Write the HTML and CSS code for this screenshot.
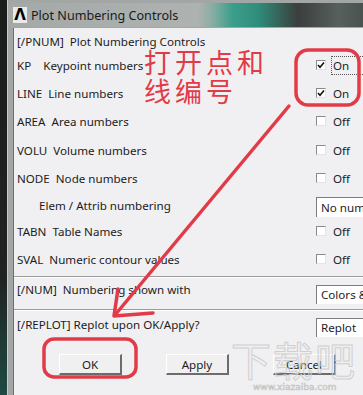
FILE: index.html
```html
<!DOCTYPE html>
<html lang="en">

<head>
    <meta charset="UTF-8" />
    <title>Plot Numbering Controls</title>
    <link rel="stylesheet" href="styles.css">
</head>

<body>
    <div class="screen">
        <div class="edge"></div>
        <div class="window">
            <!-- 标题栏 -->
            <div class="titlebar">
                <span class="logo">&Lambda;</span>
                <span class="title">Plot Numbering Controls</span>
            </div>
            <div class="dialog">
                <div class="heading">[/PNUM]  Plot Numbering Controls</div>
                <div class="row">
                    <span class="label">KP    Keypoint numbers</span>
                    <span class="check"><span class="box"><svg viewBox="0 0 8 8"><polyline points="1,4 3,6.3 7,1.5" /></svg></span><span class="focus">On</span></span>
                </div>
                <div class="row">
                    <span class="label">LINE  Line numbers</span>
                    <span class="check"><span class="box"><svg viewBox="0 0 8 8"><polyline points="1,4 3,6.3 7,1.5" /></svg></span><span>On</span></span>
                </div>
                <div class="row tall">
                    <span class="label">AREA  Area numbers</span>
                    <span class="check"><span class="box"></span><span>Off</span></span>
                </div>
                <div class="row">
                    <span class="label">VOLU  Volume numbers</span>
                    <span class="check"><span class="box"></span><span>Off</span></span>
                </div>
                <div class="row tall">
                    <span class="label">NODE  Node numbers</span>
                    <span class="check"><span class="box"></span><span>Off</span></span>
                </div>
                <div class="row short">
                    <span class="label indent">Elem / Attrib numbering</span>
                    <span class="select">No numbering</span>
                </div>
                <div class="row">
                    <span class="label">TABN  Table Names</span>
                    <span class="check"><span class="box"></span><span>Off</span></span>
                </div>
                <div class="row">
                    <span class="label">SVAL  Numeric contour values</span>
                    <span class="check"><span class="box"></span><span>Off</span></span>
                </div>
                <div class="sep"></div>
                <div class="row opt">
                    <span class="label">[/NUM]  Numbering shown with</span>
                    <span class="select">Colors &amp; numbers</span>
                </div>
                <div class="sep"></div>
                <div class="row opt last">
                    <span class="label">[/REPLOT] Replot upon OK/Apply?</span>
                    <span class="select">Replot</span>
                </div>
                <div class="buttons">
                    <span class="btn">OK</span>
                    <span class="btn">Apply</span>
                    <span class="btn">Cancel</span>
                </div>
            </div>
        </div>

        <!-- 标注 -->
        <svg class="marks" viewBox="0 0 363 395">
            <rect x="296" y="50" width="63" height="55" rx="12" />
            <line x1="289" y1="106" x2="115" y2="315" />
            <polyline points="118,289 114,316 153,313" />
            <rect x="44" y="339" width="92" height="38" rx="10" />
        </svg>
        <div class="note">打开点和<br>线编号</div>
        <div class="watermark">
            <div class="big">下载吧</div>
            <div class="url">www.xiazaiba.com</div>
        </div>
    </div>
</body>

</html>
```

FILE: styles.css
```css
body {
    margin: 0;
    padding: 0;
    background-color: #1e2120;
    overflow: hidden;
}

.screen {
    position: relative;
    display: flex;
    width: 363px;
    height: 395px;
    overflow: hidden;
    font-family: "Noto Sans", "Open Sans", sans-serif;
    font-size: 11.6px;
    color: #1c1c1c;
}

.edge {
    flex: none;
    width: 7px;
    background: linear-gradient(#1b1d1c 0, #202322 70%, #1f4a44 100%);
}

.window {
    display: flex;
    flex-direction: column;
    flex: none;
    width: 420px;
    padding-top: 3px;
    padding-left: 5px;
    background-color: #a2a7a5;
    border-left: 1px solid #c8cccb;
    box-sizing: border-box;
}

.titlebar {
    display: flex;
    flex: none;
    align-items: center;
    height: 24px;
    margin-left: -5px;
    padding-left: 5px;
    background: linear-gradient(to right, #a4a9a7 0, #aeb2b0 190px, #86ada3 205px, #3a9e8a 225px, #2f8d7b 250px, #3b3e3c 290px, #56605c 330px, #2c2e2d 420px);
}

.logo {
    display: flex;
    align-items: center;
    justify-content: center;
    width: 14px;
    height: 16px;
    background-color: #e8eae9;
    font-family: "DejaVu Sans", sans-serif;
    font-weight: bold;
    font-size: 15px;
    color: #000;
}

.title {
    margin-left: 4px;
    font-size: 12.6px;
    color: #1a1a1a;
}

.dialog {
    flex: 1;
    margin-top: 1px;
    padding-top: 4px;
    background-color: #f0f0f2;
    border-left: 1px solid #6b6f6e;
    box-sizing: border-box;
}

.heading {
    height: 19px;
    line-height: 19px;
    padding-left: 3px;
    white-space: pre;
}

.row {
    display: grid;
    grid-template-columns: 302px 1fr;
    align-items: center;
    height: 28px;
}

.row.tall {
    height: 29px;
}

.row.short {
    height: 24px;
}

.row.opt {
    align-items: start;
}

.label {
    padding-left: 3px;
    white-space: pre;
}

.label.indent {
    padding-left: 25px;
}

.row.opt .label {
    padding-top: 3px;
    line-height: 18px;
}

.row.last .label {
    padding-top: 5px;
}

.check {
    display: flex;
    align-items: center;
}

.box {
    display: block;
    width: 8px;
    height: 8px;
    margin-top: -1px;
    margin-right: 7px;
    background-color: #fff;
    border-top: 1px solid #8a8a8a;
    border-left: 1px solid #8a8a8a;
    border-right: 1px solid #e4e4e4;
    border-bottom: 1px solid #e4e4e4;
}

.box svg {
    display: block;
    width: 8px;
    height: 8px;
    fill: none;
    stroke: #111;
    stroke-width: 1.6;
}

.focus {
    width: 80px;
    margin-left: -2px;
    padding: 0 1px;
    line-height: 17px;
    border: 1px dotted #555;
}

.select {
    display: block;
    height: 18px;
    line-height: 18px;
    padding-left: 4px;
    background-color: #fff;
    border-top: 1px solid #7c7c7c;
    border-left: 1px solid #7c7c7c;
    white-space: nowrap;
}

.row.short .select {
    margin-top: 3px;
    height: 19px;
    line-height: 19px;
}

.row.opt .select {
    margin-top: 7px;
}

.sep {
    margin-top: 3px;
    height: 1px;
    background-color: #9c9c9c;
    border-bottom: 1px solid #fff;
}

.buttons {
    display: flex;
    gap: 44px;
    margin-top: 15px;
    padding-left: 45px;
}

.btn {
    display: flex;
    align-items: center;
    justify-content: center;
    width: 63px;
    height: 21px;
    box-sizing: border-box;
    background-color: #f0f0f0;
    border-top: 1px solid #fff;
    border-left: 1px solid #fff;
    border-right: 2px solid #6c6c6c;
    border-bottom: 2px solid #6c6c6c;
}

.marks {
    position: absolute;
    left: 0;
    top: 0;
    width: 363px;
    height: 395px;
    fill: none;
    stroke: #e23b48;
    stroke-width: 3.5;
    stroke-linecap: round;
    stroke-linejoin: round;
}

.note {
    position: absolute;
    left: 144px;
    top: 47px;
    font-family: "Noto Sans CJK SC", sans-serif;
    font-size: 27px;
    line-height: 29px;
    letter-spacing: 4px;
    color: #e23b48;
}

.watermark {
    position: absolute;
    left: 231px;
    top: 336px;
    color: transparent;
    -webkit-text-stroke: 1px #cfcfcf;
}

.watermark .big {
    font-family: "Noto Sans CJK SC", sans-serif;
    font-size: 40px;
    line-height: 46px;
    letter-spacing: 2px;
}

.watermark .url {
    margin-left: 22px;
    font-family: "DejaVu Sans", sans-serif;
    font-size: 9px;
    line-height: 10px;
    -webkit-text-stroke: 0.6px #c4c4c4;
}
```
